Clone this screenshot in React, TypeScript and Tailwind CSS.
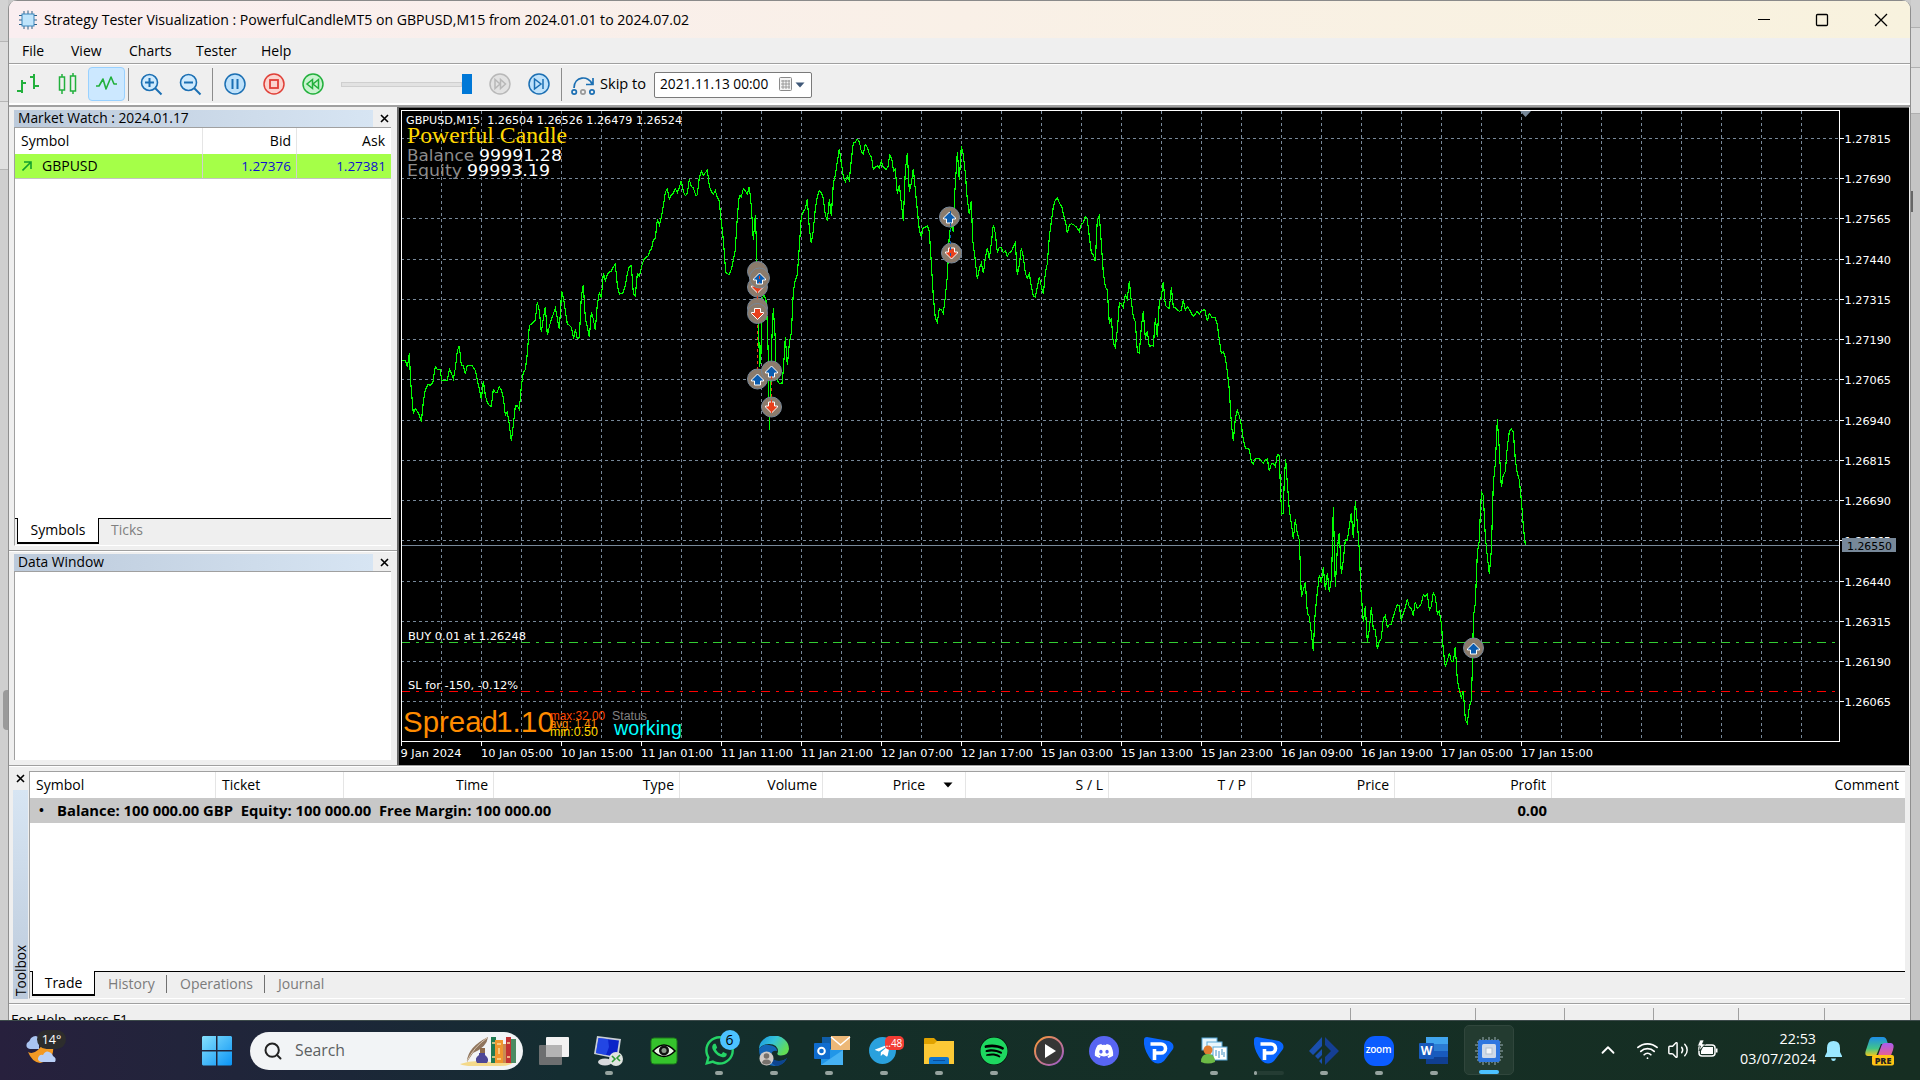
import type { ReactNode } from 'react';
import { ChevronUp, Search, Volume2, Wifi } from 'lucide-react';
import { FaDiscord, FaSpotify, FaTelegramPlane, FaWhatsapp } from 'react-icons/fa';

const GRID_Y = [138, 178, 218, 259, 299, 339, 379, 420, 460, 500, 540, 581, 621, 661, 701];
const PRICES = [
  '1.27815', '1.27690', '1.27565', '1.27440', '1.27315', '1.27190', '1.27065', '1.26940',
  '1.26815', '1.26690', '1.26565', '1.26440', '1.26315', '1.26190', '1.26065',
];
const GRID_X = Array.from({ length: 35 }, (_, i) => 441 + i * 40);
const TIMES = [
  '9 Jan 2024', '10 Jan 05:00', '10 Jan 15:00', '11 Jan 01:00', '11 Jan 11:00', '11 Jan 21:00',
  '12 Jan 07:00', '12 Jan 17:00', '15 Jan 03:00', '15 Jan 13:00', '15 Jan 23:00', '16 Jan 09:00',
  '16 Jan 19:00', '17 Jan 05:00', '17 Jan 15:00',
];

// close prices, in thirds of a pixel from each segment's origin
const SEGMENTS = [
  {
    origin: 'translate(390 100) scale(0.33333)',
    points:
      '36,781 46,781 52,801 58,760 62,845 70,942 76,925 82,934 88,946 94,966 100,905 106,870 114,853 120,856 128,850 136,800 142,808 150,808 156,842 172,840 178,808 184,820 190,836 196,805 202,752 208,737 214,796 220,797 226,822 232,796 246,796 256,812 262,840 268,868 274,898 280,843 286,886 292,908 298,916 304,919 310,868 316,877 321,878 328,861 334,870 340,893 346,945 352,936 358,975 364,1024 370,975 376,918 382,918 388,928 394,860 400,818 406,808 412,760 418,677 426,670 436,660 442,606 448,632 454,696 460,655 466,620 472,705 478,680 484,658 490,642 496,624 502,655 508,688 515,572 521,598 527,640 532,672 538,676 544,682 551,716 556,688 562,716 568,712 574,588 580,555 586,655 592,680 598,712 604,635 610,658 616,690 622,612 628,578 634,594 640,520 646,541 652,524 658,516 664,514 670,500 676,493 682,556 688,582 698,580 706,556 712,520 718,500 724,496 730,580 736,588 742,520 748,528 756,495 762,478 768,472 774,468 780,452 784,448 790,420 796,415 802,358 808,375 814,352 820,318 826,276 832,268 838,297 844,284 850,280 856,266 862,278 868,262 874,242 880,274 886,287 892,280 898,238 904,260 910,264 918,288 922,284 928,232 934,214 940,226 946,218 952,211 958,258 964,275 970,282 976,272 982,292 988,304 992,350 998,400 1002,445 1007,518 1012,521 1018,524 1024,508 1030,480 1036,450 1040,380 1046,300 1050,286 1054,290 1060,266 1066,272 1072,282 1078,260 1084,320 1090,420 1096,346 1099,420 1101,490 1104,600 1106,700 1109,800 1113,760 1115,600 1122,585 1128,600 1131,650 1135,770 1138,990 1143,850 1145,730 1150,625 1155,700 1158,790 1162,843 1168,850 1176,850 1180,810 1186,712 1192,796 1198,730 1204,700 1210,575 1216,540 1222,525 1228,440 1234,350 1240,335 1246,325 1252,298 1258,385 1264,430 1270,390 1276,325 1282,290 1288,271 1294,278 1300,296 1306,345 1312,362 1318,298 1324,347 1330,250 1336,225 1342,185 1348,146 1354,190 1360,230 1366,246 1372,228 1378,240 1384,180 1390,128 1396,126 1402,117',
  },
  {
    origin: 'translate(800 100) scale(0.33333)',
    points:
      '172,117 178,125 184,155 190,162 196,133 202,142 208,162 214,170 220,207 226,202 232,197 238,204 244,184 250,202 258,208 264,200 269,165 275,176 281,214 286,208 292,282 298,254 304,310 310,362 316,210 322,160 328,276 334,250 340,206 346,270 352,330 358,390 364,411 370,382 376,381 382,377 388,395 394,490 400,590 406,655 412,666 418,626 424,630 430,640 436,590 442,530 448,400 452,385 456,380 460,396 463,300 468,220 472,155 478,240 484,138 490,165 496,220 502,300 508,343 514,302 518,420 524,465 532,538 538,505 544,490 550,520 556,475 562,443 568,478 574,430 580,374 586,400 592,458 598,442 604,444 610,458 616,453 622,468 628,458 634,455 640,440 646,428 652,526 658,495 664,443 670,472 676,520 682,535 688,521 694,560 700,588 706,592 712,560 718,530 724,560 730,582 736,520 742,490 748,410 756,350 760,320 766,300 772,293 778,308 786,322 792,350 798,372 802,400 808,376 814,371 822,375 830,382 838,394 844,372 850,368 856,350 862,358 868,410 874,458 880,465 886,484 892,358 898,347 904,430 910,520 916,560 922,570 928,672 934,654 940,730 946,741 952,690 958,608 964,612 970,622 976,584 982,597 988,542 994,605 1000,650 1006,665 1012,755 1018,760 1024,680 1030,634 1036,716 1042,694 1048,740 1054,736 1060,738 1066,655 1072,710 1078,605 1084,590 1090,545 1096,616 1102,622 1108,626 1114,562 1120,622 1126,624 1132,630 1138,634 1144,630 1150,600 1156,630 1162,620 1168,628 1174,640 1180,649 1186,642 1192,634 1198,642 1204,634',
  },
  {
    origin: 'translate(1180 250) scale(0.33333)',
    points:
      '64,184 74,178 82,214 88,190 96,202 106,203 112,225 118,270 124,310 130,305 136,322 142,365 148,420 154,520 160,573 166,505 172,482 178,498 184,525 190,570 196,594 208,598 214,635 220,642 226,625 238,627 250,640 256,630 262,626 268,664 274,642 280,640 286,650 292,613 298,617 302,740 306,792 310,790 313,680 317,628 322,700 328,780 334,820 340,868 346,808 352,850 358,870 361,950 364,1042 370,1020 376,995 382,1090 388,1100 394,1150 400,1204 404,1110 410,1045 418,975 424,1000 430,950 436,1020 442,968 448,1026 454,990 457,900 460,770 466,1010 472,895 478,848 484,972 490,930 496,870 502,870 508,830 514,788 520,865 526,753 532,820 538,900 542,1010 550,1115 556,1068 562,1176 568,1140 574,1070 580,1138 586,1140 592,1197 598,1175 604,1165 610,1105 616,1097 622,1132 628,1124 634,1122 640,1100 646,1080 652,1064 658,1068 664,1112 670,1090 676,1072 682,1048 688,1072 694,1076 700,1097 706,1055 712,1076 718,1070 724,1060 730,1034 736,1040 742,1032 748,1080 754,1070 760,1028 766,1040 772,1092 778,1083 784,1120 790,1200 796,1252 802,1232 808,1208 814,1234 820,1234 826,1190 832,1290 838,1320 844,1342 850,1322 856,1410 862,1420 868,1370 874,1350 878,1230 880,1100 886,1060 892,910 898,870 902,760 905,727 910,737 916,860 922,920 928,972 934,900 940,700 946,640 952,508 958,600 964,712 970,675 976,665 982,590 988,545 994,536 1000,546 1006,630 1012,670 1018,690 1024,750 1030,830 1036,885',
  },
];

const MARKERS: { x: number; y: number; kind: 'buy' | 'sell' | 'blank' }[] = [
  { x: 757.5, y: 271.5, kind: 'blank' },
  { x: 757.5, y: 287, kind: 'sell' },
  { x: 759.5, y: 278, kind: 'buy' },
  { x: 757.5, y: 308, kind: 'blank' },
  { x: 757.5, y: 313.5, kind: 'sell' },
  { x: 757.5, y: 379, kind: 'buy' },
  { x: 771.5, y: 371, kind: 'buy' },
  { x: 771.5, y: 407, kind: 'sell' },
  { x: 949.5, y: 217, kind: 'buy' },
  { x: 951.5, y: 253, kind: 'sell' },
  { x: 1473.5, y: 648, kind: 'buy' },
];

interface LabelProps {
  x: number;
  y: number;
  w: number;
  size?: number;
  fill?: string;
  font?: string;
  children: string;
}

function Label({ x, y, w, size = 11, fill = '#fff', font = '"DejaVu Sans Condensed", "DejaVu Sans", sans-serif', children }: LabelProps) {
  return (
    <text x={x} y={y} fontSize={size} fill={fill} fontFamily={font} textLength={w} lengthAdjust="spacingAndGlyphs" xmlSpace="preserve">
      {children}
    </text>
  );
}

function Marker({ x, y, kind }: { x: number; y: number; kind: string }) {
  return (
    <g transform={`translate(${x} ${y})`}>
      <circle r="10" fill="#8b7b6c" stroke="#778899" />
      {kind === 'buy' && <path d="M0 -5L6 1V2H3V6H-3V2H-6V1Z" fill="#0a5cb0" stroke="#fff" />}
      {kind === 'sell' && <path d="M0 6L6 0V-1H3V-5H-3V-1H-6V0Z" fill="#e8401c" stroke="#fff" />}
    </g>
  );
}

function Chart() {
  const arial = '"Liberation Sans", Arial, sans-serif';
  const verdana = '"DejaVu Sans", Verdana, sans-serif';
  return (
    <svg width="1510" height="657" viewBox="399 108 1510 657" className="block bg-black">
      <g shapeRendering="crispEdges" stroke="#778899" fill="none">
        {GRID_Y.map((y) => (
          <line key={y} x1="401" x2="1839" y1={y + 0.5} y2={y + 0.5} strokeDasharray="3 3" />
        ))}
        {GRID_X.map((x) => (
          <line key={x} x1={x + 0.5} x2={x + 0.5} y1="111" y2="741" strokeDasharray="3 3" />
        ))}
        <line x1="402" x2="1839" y1="545.5" y2="545.5" />
        <line x1="402" x2="1836" y1="642.5" y2="642.5" stroke="#32cd32" strokeDasharray="9 6 3 6" strokeDashoffset="1" />
        <line x1="402" x2="1836" y1="691.5" y2="691.5" stroke="#ff0000" strokeDasharray="9 6 3 6" strokeDashoffset="1" />
      </g>

      <g fill="none" stroke="#00ff00" strokeWidth="1.15">
        {SEGMENTS.map((s) => (
          <polyline key={s.origin} points={s.points} transform={s.origin} vectorEffect="non-scaling-stroke" shapeRendering="crispEdges" />
        ))}
      </g>

      {/* frame, ticks and scroll mark */}
      <g shapeRendering="crispEdges" stroke="#fff" fill="none">
        <path d="M401.5 745V110.5H1839.5V741.5H401" />
        {TIMES.map((t, i) => (
          <line key={t} x1={401.5 + i * 80} x2={401.5 + i * 80} y1="742" y2="746" />
        ))}
        {GRID_Y.map((y) => (
          <line key={y} x1="1840" x2="1844" y1={y + 0.5} y2={y + 0.5} />
        ))}
      </g>
      <path d="M1520 111H1531L1525.5 117Z" fill="#778899" />

      {PRICES.map((p, i) => (
        <Label key={p} x={1844.5} y={GRID_Y[i] + 4.5} w={46.5}>{p}</Label>
      ))}
      <rect x="1842" y="538" width="54" height="14" fill="#778899" />
      <Label x={1847} y={549.5} w={45} fill="#000">1.26550</Label>
      {TIMES.map((t, i) => (
        <Label key={t} x={i === 0 ? 400.5 : 401 + i * 80} y={757} w={i === 0 ? 61 : 72}>{t}</Label>
      ))}

      {MARKERS.map((m, i) => (
        <Marker key={i} {...m} />
      ))}
      <g fill="none" shapeRendering="crispEdges" strokeDasharray="3 3">
        <path d="M757.5 290V302M757.5 325V369" stroke="#e8401c" />
        <path d="M771.5 376V413M759.5 276V283" stroke="#e8401c" />
        <path d="M950.5 211V257" stroke="#0a5cb0" />
      </g>

      <Label x={406} y={123.5} w={276}>GBPUSD,M15  1.26504 1.26526 1.26479 1.26524</Label>
      <Label x={407} y={142.5} w={160} size={22.5} fill="#ffd700" font='"Liberation Serif", serif'>Powerful Candle</Label>
      <Label x={407} y={160.5} w={67} size={16} fill="#8c8c8c" font={verdana}>Balance</Label>
      <Label x={479} y={160.5} w={83} size={16} font={verdana}>99991.28</Label>
      <Label x={407} y={176} w={55} size={16} fill="#8c8c8c" font={verdana}>Equity</Label>
      <Label x={467} y={176} w={83} size={16} font={verdana}>99993.19</Label>
      <Label x={408} y={640} w={118}>BUY 0.01 at 1.26248</Label>
      <Label x={408} y={689} w={110}>SL for -150, -0.12%</Label>
      <Label x={403} y={731.5} w={95} size={30} fill="#ff8c00" font={arial}>Spread</Label>
      <Label x={496} y={731.5} w={58} size={30} fill="#ff8c00" font={arial}>1.10</Label>
      <Label x={550} y={719.5} w={55} size={12} fill="#ff4500" font={arial}>max:32.00</Label>
      <Label x={550} y={728} w={47} size={12} fill="#ff8c00" font={arial}>avg: 1.41</Label>
      <Label x={550} y={736} w={48} size={12} fill="#ffd700" font={arial}>min:0.50</Label>
      <Label x={612} y={720} w={35} size={12} fill="#808080" font={arial}>Status</Label>
      <Label x={614} y={735} w={68} size={20} fill="#00ffff" font={arial}>working</Label>
    </svg>
  );
}

function Cross({ className = '' }: { className?: string }) {
  return (
    <svg width="9" height="9" viewBox="0 0 9 9" className={className}>
      <path d="M1 1L8 8M8 1L1 8" stroke="#000" strokeWidth="1.6" />
    </svg>
  );
}

function TitleBar() {
  return (
    <div className="h-[38px] shrink-0 flex items-center bg-gradient-to-r from-[#faeef0] to-[#f8f2de] border-t border-[#8a8a8a] pl-[9px]">
      <svg width="20" height="20" viewBox="0 0 20 20" className="shrink-0">
        <path d="M6 1V19M10 0.5V19.5M14 1V19M1 5.500H19M1 10H19M1 14.500H19" stroke="#2a5f86" strokeWidth="1" />
        <rect x="4" y="4" width="12" height="12" fill="#bfe4fb" stroke="#3a86bd" />
      </svg>
      <span className="ml-[6px] flex-1 text-[14.1px]">
        Strategy Tester Visualization : PowerfulCandleMT5 on GBPUSD,M15 from 2024.01.01 to 2024.07.02
      </span>
      <svg width="130" height="14" viewBox="0 0 130 14" fill="none" stroke="#000" className="mr-[22px]">
        <path d="M0 6.500H12" />
        <rect x="58.500" y="1.500" width="11" height="11" rx="1" strokeWidth="1.300" />
        <path d="M117 1L129 13M129 1L117 13" strokeWidth="1.300" />
      </svg>
    </div>
  );
}

function MenuBar() {
  return (
    <div className="h-[26px] shrink-0 flex items-center border-b border-[#a0a0a0] text-[14px] pt-px pl-[13px]">
      <span className="w-[49px]">File</span>
      <span className="w-[58px]">View</span>
      <span className="w-[67px]">Charts</span>
      <span className="w-[65px]">Tester</span>
      <span>Help</span>
    </div>
  );
}

function RoundIcon({ color, fill, children }: { color: string; fill: string; children: ReactNode }) {
  return (
    <svg width="22" height="22" viewBox="0 0 22 22" className="shrink-0" fill="none" stroke={color} strokeWidth="1.500">
      <circle cx="11" cy="11" r="10" fill={fill} />
      {children}
    </svg>
  );
}

function Toolbar() {
  return (
    <div className="h-[39px] shrink-0 flex items-center border-t border-white text-[14px]">
      <svg width="24" height="24" viewBox="0 0 24 24" className="ml-[8px] shrink-0" fill="none" stroke="#22b03c" strokeWidth="2">
        <path d="M5 8V21M0 19H5M5 11H9M17 2V17M13 5H17M17 14H22" />
      </svg>
      <svg width="20" height="24" viewBox="0 0 20 24" className="ml-[17px] shrink-0" stroke="#22b03c" strokeWidth="1.500" fill="none">
        <path d="M4 2V5M4 18V22M15 1V4M15 19V22" />
        <rect x="1.500" y="5" width="5" height="13" />
        <rect x="12.500" y="4" width="5" height="15" />
      </svg>
      <div className="ml-[10px] w-[37px] h-[34px] shrink-0 flex items-center justify-center bg-[#cce8ff] border border-[#99d1ff] rounded-sm">
        <svg width="22" height="16" viewBox="0 0 22 16" fill="none" stroke="#22b03c" strokeWidth="1.600" strokeLinejoin="round">
          <path d="M0 10H3L7 3L10 13L15 1L18 8H21" />
        </svg>
      </div>
      <div className="ml-[3px] w-px h-[33px] bg-[#8c8c8c]" />
      <svg width="23" height="23" viewBox="0 0 23 23" className="ml-[11px] shrink-0" fill="none" stroke="#1b6fb3" strokeWidth="1.600">
        <path d="M15 15L21.500 21.500" strokeWidth="2" />
        <circle cx="9.500" cy="9.500" r="8" fill="#cfeafd" />
        <path d="M5 9.500H14M9.500 5V14" strokeWidth="2" />
      </svg>
      <svg width="23" height="23" viewBox="0 0 23 23" className="ml-[16px] shrink-0" fill="none" stroke="#1b6fb3" strokeWidth="1.600">
        <path d="M15 15L21.500 21.500" strokeWidth="2" />
        <circle cx="9.500" cy="9.500" r="8" fill="#cfeafd" />
        <path d="M5 9.500H14" strokeWidth="2" />
      </svg>
      <div className="ml-[10px] mr-[11px] w-px h-[33px] bg-[#8c8c8c]" />
      <RoundIcon color="#1b6fb3" fill="#bfe2fb">
        <path d="M8.500 6V16M13.500 6V16" strokeWidth="2" />
      </RoundIcon>
      <div className="w-[17px]" />
      <RoundIcon color="#e04038" fill="#fbd5d0">
        <rect x="7" y="7" width="8" height="8" strokeWidth="1.800" />
      </RoundIcon>
      <div className="w-[17px]" />
      <RoundIcon color="#22b03c" fill="#c9f3cf">
        <path d="M10.500 6.500V15.500L5 11ZM16.500 6.500V15.500L11 11Z" />
      </RoundIcon>
      <div className="ml-[17px] w-[121px] h-[5px] shrink-0 bg-[#e2e2e2] border border-[#cfcfcf]" />
      <div className="w-[10px] h-[20px] shrink-0 bg-[#0078d7]" />
      <div className="w-[17px]" />
      <RoundIcon color="#b8b8b8" fill="#e2e2e2">
        <path d="M6 6.500V15.500L11 11ZM11.500 6.500V15.500L16.500 11Z" />
      </RoundIcon>
      <div className="w-[17px]" />
      <RoundIcon color="#1b6fb3" fill="#bfe2fb">
        <path d="M6.500 6V16L13 11ZM15 6V16" />
      </RoundIcon>
      <div className="ml-[11px] w-px h-[33px] bg-[#8c8c8c]" />
      <svg width="25" height="20" viewBox="0 0 25 20" className="ml-[9px] mt-[3px] shrink-0" fill="none" stroke="#1b6fb3" strokeWidth="1.700">
        <path d="M3 12C3 0 18 -1 21 8M22 2V8.500H15" />
        <circle cx="3.200" cy="16" r="2.200" />
        <circle cx="12" cy="16" r="2.200" stroke="#999" />
        <circle cx="21" cy="16" r="2.200" />
      </svg>
      <span className="ml-[4px] w-[54px] text-[14.6px]">Skip to</span>
      <div className="mt-px w-[158px] h-[26px] shrink-0 flex items-center bg-white border border-[#7a7a7a] rounded-[2px]">
        <span className="ml-[5px] w-[119px] text-[13.7px]">2021.11.13 00:00</span>
        <svg width="14" height="15" viewBox="0 0 14 15" stroke="#8a8a8a" fill="#f4f4f4">
          <rect x="0.500" y="0.500" width="12" height="13" rx="1" />
          <path d="M2 4H11M2 7H11M2 10H11M4 3V12M7 3V12M10 3V12" strokeWidth="0.800" />
        </svg>
        <svg width="10" height="6" viewBox="0 0 10 6" className="ml-[2px]">
          <path d="M0.500 0.500H9.500L5 5.500Z" fill="#3f5878" />
        </svg>
      </div>
    </div>
  );
}

function PanelCaption({ title }: { title: string }) {
  return (
    <div className="h-[17px] shrink-0 flex items-center">
      <div className="w-[359px] h-full flex items-center bg-gradient-to-r from-[#bccadb] to-[#d7e5f3] pl-[4px] text-[13.8px]">{title}</div>
      <Cross className="ml-[7px]" />
    </div>
  );
}

function MarketWatch() {
  return (
    <div className="h-[443px] shrink-0 flex flex-col pt-[3px] pl-[5px] pr-[6px]">
      <PanelCaption title="Market Watch : 2024.01.17" />
      <div className="h-[391px] shrink-0 flex flex-col bg-white border-l border-t border-[#a0a0a0] text-[14px]">
        <div className="h-[26px] flex items-center">
          <span className="w-[188px] h-full flex items-center pl-[6px] border-r border-[#e5e5e5]">Symbol</span>
          <span className="w-[94px] h-full flex items-center justify-end pr-[5px] border-r border-[#e5e5e5]">Bid</span>
          <span className="flex-1 text-right pr-[6px]">Ask</span>
        </div>
        <div className="h-[25px] flex items-center bg-[#a5ff48] border-b border-[#c3c3c3] text-[#0f0fd0]">
          <span className="w-[188px] h-full flex items-center pl-[7px] border-r border-[#d0d0d0] text-black">
            <svg width="10" height="10" viewBox="0 0 10 10" className="mr-[10px]" fill="none" stroke="#12a02c" strokeWidth="1.600">
              <path d="M0.500 9.500L9 1M2 1H9V8" />
            </svg>
            GBPUSD
          </span>
          <span className="w-[94px] h-full flex items-center justify-end pr-[5px] border-r border-[#d0d0d0] text-[13.5px]">1.27376</span>
          <span className="flex-1 text-right pr-[5px] text-[13.5px]">1.27381</span>
        </div>
      </div>
      <div className="h-[28px] flex bg-[#efefef] border-l border-[#a0a0a0] border-b border-b-white text-[14px]">
        <div className="w-[2px] h-px bg-black" />
        <div className="w-[82px] h-[26px] flex items-center justify-center bg-white border-x border-b-2 border-black">Symbols</div>
        <div className="flex-1 border-t border-black pt-[2px] pl-[12px] text-[#808080]">Ticks</div>
      </div>
    </div>
  );
}

function DataWindow() {
  return (
    <div className="flex-1 flex flex-col border-t border-[#a0a0a0] pt-[3px] pl-[5px] pr-[6px] shadow-[inset_0_1px_0_#fff]">
      <PanelCaption title="Data Window" />
      <div className="h-[189px] bg-white border-l border-t border-[#a0a0a0]" />
    </div>
  );
}

const COLUMNS = [
  { title: 'Symbol', cls: 'w-[186px] pl-[6px]' },
  { title: 'Ticket', cls: 'w-[128px] pl-[6px]' },
  { title: 'Time', cls: 'w-[150px] pr-[5px] justify-end' },
  { title: 'Type', cls: 'w-[186px] pr-[5px] justify-end' },
  { title: 'Volume', cls: 'w-[143px] pr-[5px] justify-end' },
  { title: 'Price', cls: 'w-[143px] pr-[12px] justify-end' },
  { title: 'S / L', cls: 'w-[143px] pr-[5px] justify-end' },
  { title: 'T / P', cls: 'w-[143px] pr-[5px] justify-end' },
  { title: 'Price', cls: 'w-[143px] pr-[5px] justify-end' },
  { title: 'Profit', cls: 'w-[157px] pr-[5px] justify-end' },
];

function Toolbox() {
  return (
    <div className="h-[238px] shrink-0 flex border-t border-[#a0a0a0] shadow-[inset_0_1px_0_#fff]">
      <div className="w-[20px] shrink-0 flex flex-col items-center">
        <Cross className="mt-[8px] ml-[2px]" />
        <div className="mt-[7px] ml-[2px] w-[15px] h-[209px] flex items-center bg-gradient-to-b from-[#d7e5f3] to-[#bccadb]">
          <span className="mt-auto mb-[3px] leading-[15px] text-[13.6px] [writing-mode:vertical-rl] rotate-180">Toolbox</span>
        </div>
      </div>
      <div className="mt-[5px] w-[1876px] flex flex-col">
        <div className="h-[200px] bg-white border-l border-t border-[#a0a0a0]">
          <div className="h-[26px] flex text-[14px]">
            {COLUMNS.map((c, i) => (
              <div key={i} className={`${c.cls} shrink-0 flex items-center border-r border-[#e5e5e5]`}>
                {c.title}
                {i === 5 && (
                  <svg width="10" height="6" viewBox="0 0 10 6" className="ml-[18px]">
                    <path d="M0.500 0.500H9.500L5 5.500Z" />
                  </svg>
                )}
              </div>
            ))}
            <div className="flex-1 flex items-center justify-end pr-[6px]">Comment</div>
          </div>
          <div className="h-[25px] flex items-center bg-[#c8c8c8] text-[14.8px] font-bold">
            <span className="w-[27px] pl-[9px] text-[13px]">•</span>
            <span className="flex-1 whitespace-pre">Balance: 100 000.00 GBP  Equity: 100 000.00  Free Margin: 100 000.00</span>
            <span className="mr-[358px]">0.00</span>
          </div>
        </div>
        <div className="h-[28px] flex border-l border-[#a0a0a0] border-b border-b-white text-[14px] text-[#7b7b7b]">
          <div className="w-[2px] h-px bg-black" />
          <div className="w-[63px] h-[25px] flex items-center justify-center bg-white border-x border-b-2 border-black text-black pt-px">Trade</div>
          <div className="flex-1 flex items-center border-t border-black pb-[2px]">
            <span className="pl-[13px] w-[72px] border-r border-[#707070]">History</span>
            <span className="pl-[13px] w-[98px] border-r border-[#707070]">Operations</span>
            <span className="pl-[13px]">Journal</span>
          </div>
        </div>
      </div>
    </div>
  );
}

function StatusBar() {
  return (
    <div className="flex-1 flex overflow-hidden border-t border-[#a0a0a0] shadow-[inset_0_1px_0_#fff] text-[14px]">
      <span className="pl-[2px] pt-[7px] w-[1341px] whitespace-nowrap">For Help, press F1</span>
      <div className="mt-[4px] w-[125px] border-l border-[#a0a0a0]" />
      <div className="mt-[4px] w-[89px] border-l border-[#a0a0a0]" />
      <div className="mt-[4px] w-[89px] border-l border-[#a0a0a0]" />
      <div className="mt-[4px] w-[85px] border-l border-[#a0a0a0]" />
      <div className="mt-[4px] w-[86px] border-l border-[#a0a0a0]" />
      <div className="mt-[4px] flex-1 border-l border-[#a0a0a0]" />
    </div>
  );
}

function Slot({ open = false, children }: { open?: boolean; children: ReactNode }) {
  return (
    <div className="w-[55px] h-[60px] shrink-0 flex flex-col items-center pt-[15px]">
      <div className="w-[30px] h-[30px] relative">{children}</div>
      {open && <div className="mt-[5px] w-[8px] h-[4px] rounded-full bg-[#96a39f]" />}
    </div>
  );
}

function PIcon() {
  return (
    <svg width="30" height="30" viewBox="0 0 30 30">
      <path d="M3 1L25 5Q31 8 29 13L20 25Q14 30 8 25Q-1 14 0 4Q0 1 3 1Z" fill="#0a66ff" />
      <path d="M10.500 24V13M6.500 8H17A4 4 0 0 1 17 17H12" fill="none" stroke="#fff" strokeWidth="3.600" />
    </svg>
  );
}

function Weather() {
  return (
    <div className="relative w-[202px] h-full shrink-0">
      <svg width="32" height="32" viewBox="0 0 32 32" className="absolute left-[26px] top-[13px]">
        <path d="M2 18Q10 22 18 8L27 12Q29 26 14 29Q6 28 2 18Z" fill="#f39a24" />
        <path d="M4 15Q-1 14 1 9Q4 7 5 4Q10 0 13 4V15Z" fill="#a9c3f0" />
        <path d="M15 28Q10 26 13 22Q15 20 17 21Q20 15 25 19Q27 21 27 22Q31 24 29 28Z" fill="#b9d0f7" />
      </svg>
      <span className="absolute left-[37px] top-[9px] w-[29px] h-[19px] rounded-full bg-[#2d2d2d] text-white text-[12.5px] leading-[19px] text-center">
        14°
      </span>
    </div>
  );
}

function Taskbar() {
  return (
    <div className="h-[60px] flex items-center border-t border-[#3c4a4a] bg-[linear-gradient(90deg,#27203d_0px,#22243b_180px,#1c2738_350px,#142d31_560px,#142e29_800px,#152f26_1200px,#162e22_1920px)] text-white">
      <Weather />
      <svg width="30" height="30" viewBox="0 0 30 30" className="shrink-0">
        <defs>
          <linearGradient id="win" x1="0" y1="0" x2="1" y2="1">
            <stop offset="0" stopColor="#86e0fd" />
            <stop offset="1" stopColor="#0a94f5" />
          </linearGradient>
        </defs>
        <path d="M1 0H14V14H0V1ZM15.500 0H29L30 1V14H15.500ZM0 15.500H14V29.500H1L0 28.500ZM15.500 15.500H30V28.500L29 29.500H15.500Z" fill="url(#win)" />
      </svg>
      <div className="ml-[18px] w-[273px] h-[38px] shrink-0 flex items-center rounded-full bg-[#f2f4f6] pl-[13px] pr-[5px]">
        <Search size={20} color="#222" strokeWidth={2.4} />
        <span className="ml-[12px] flex-1 text-[15.8px] text-[#5c5f62]">Search</span>
        <svg width="58" height="32" viewBox="0 0 58 32">
          <path d="M0 29Q14 24 30 27H54Q50 31 40 31H12Q4 31 0 29Z" fill="#f4d98a" />
          <path d="M7 26Q8 12 28 2Q27 12 13 18L7 27Z" fill="#8f745c" />
          <path d="M7 26Q14 12 27 3" stroke="#d8c6b0" fill="none" />
          <rect x="20" y="13" width="5" height="5" fill="#8d6a4a" />
          <path d="M19 18H25V20Q30 24 27 28H17Q14 23 19 20Z" fill="#4d4796" />
          <rect x="31" y="2" width="5" height="26" fill="#1f7a52" />
          <rect x="35" y="5" width="8" height="23" fill="#f0962e" />
          <rect x="43" y="9" width="4" height="19" fill="#c98a52" />
          <rect x="46" y="2" width="5" height="26" fill="#c43232" />
          <rect x="51" y="4" width="5" height="24" fill="#4c8a62" />
          <path d="M37 9H41M37 24H41M39 13V19M32 8H35M32 22H35M47 8H50M47 22H50" stroke="#f9dc9a" strokeWidth="1.500" />
        </svg>
      </div>
      <div className="ml-[3px] flex h-full">
        <Slot>
          <svg width="30" height="30" viewBox="0 0 30 30">
            <rect x="7" y="1" width="23" height="20" rx="1" fill="#f2f2f2" />
            <rect x="0" y="9" width="23" height="20" rx="1" fill="#6d6f70" />
            <rect x="7" y="9" width="16" height="12" fill="#b4b4b4" />
          </svg>
        </Slot>
        <Slot open>
          <svg width="30" height="30" viewBox="0 0 30 30">
            <ellipse cx="11" cy="26" rx="7" ry="3.500" fill="#d8dadd" />
            <path d="M3 0L27 3L24 23L0 18Z" fill="#c9ced6" />
            <path d="M4.500 2L25 4.500L22.500 21L2 17Z" fill="#0b22c8" />
            <path d="M4.500 2L14 3L15 11L12 19L2 17Z" fill="#2c55f0" opacity="0.700" />
            <circle cx="22" cy="23" r="7" fill="#dfe3df" />
            <path d="M18 20L21 23L18 26M26 19L23 22L26 25" stroke="#2c9a34" strokeWidth="1.600" fill="none" />
          </svg>
        </Slot>
        <Slot>
          <svg width="30" height="30" viewBox="0 0 30 30">
            <rect x="2" y="2" width="26" height="26" rx="3" fill="#35c32c" stroke="#1c7a1a" />
            <path d="M4 15Q15 3 26 15Q15 26 4 15Z" fill="#e8f6e4" stroke="#000" strokeWidth="1.500" />
            <circle cx="15" cy="14.500" r="5" fill="#111" />
            <circle cx="15" cy="14.500" r="2.500" fill="#8a9a8a" />
          </svg>
        </Slot>
        <Slot open>
          <FaWhatsapp size={33} color="#25d366" className="absolute -left-[1px] -top-[2px]" />
          <span className="absolute left-[16px] -top-[6px] w-[20px] h-[20px] rounded-full bg-[#4cc2ff] text-black text-[14px] leading-[20px] text-center">6</span>
        </Slot>
        <Slot open>
          <svg width="30" height="30" viewBox="0 0 30 30">
            <defs>
              <linearGradient id="edge" x1="0" y1="0" x2="1" y2="0.500">
                <stop offset="0" stopColor="#1692e0" />
                <stop offset="0.500" stopColor="#35c3d8" />
                <stop offset="1" stopColor="#62dd55" />
              </linearGradient>
            </defs>
            <path d="M0 13A15 13.500 0 0 1 30 13Q29 20 21 19.500Q17 19 19 16Q19 8 10 8Q3 8 0 13Z" fill="url(#edge)" />
            <path d="M0 13Q3 8 10 9Q18 10 18 15Q13 14 12 19Q13 25 20 25Q25 25 28 22Q24 30 15 30Q0 28 0 13Z" fill="#1466b8" />
            <path d="M12 19Q13 25 20 25Q25 25 28 22Q24 30 17 30Q10 27 12 19Z" fill="#0d4590" />
            <circle cx="7.500" cy="22.500" r="7" fill="#cfcac6" />
            <circle cx="7.500" cy="20" r="2.800" fill="#77716c" />
            <path d="M3 27Q3 23.500 7.500 23.500Q12 23.500 12 27Q7.500 30 3 27Z" fill="#77716c" />
          </svg>
        </Slot>
        <Slot open>
          <svg width="38" height="30" viewBox="0 0 38 30">
            <rect x="8" y="1" width="18" height="16" fill="#0f5da8" />
            <rect x="7" y="13" width="22" height="16" fill="#2196e8" />
            <path d="M7 29L29 14V29Z" fill="#46b2f4" />
            <rect x="0" y="7" width="16" height="16" rx="1" fill="#0f6cce" />
            <circle cx="7.500" cy="15" r="3.300" fill="none" stroke="#fff" strokeWidth="2" />
            <rect x="17" y="0" width="19" height="14" fill="#edb878" />
            <path d="M17 1L26.500 9L36 1" fill="none" stroke="#fff" strokeWidth="1.500" />
          </svg>
        </Slot>
        <Slot open>
          <div className="mt-[1px] w-[27px] h-[27px] rounded-full bg-[#2aa1dd] flex items-center justify-center">
            <FaTelegramPlane size={17} color="#fff" />
          </div>
          <span className="absolute left-[16px] top-0 w-[19px] h-[14px] rounded-[5px] bg-[#f23c34] text-white text-[10px] leading-[14px] text-center">..48</span>
        </Slot>
        <Slot open>
          <svg width="30" height="30" viewBox="0 0 30 30">
            <path d="M0 3Q0 2 1 2H10L13 5V12H0Z" fill="#e0a200" />
            <path d="M0 8H10L13 5H30V28H0Z" fill="#fcc936" />
            <path d="M5 28V23Q5 21 7 21H23Q25 21 25 23V28Z" fill="#0f76cf" />
            <path d="M9 24.500H21" stroke="#0a4c9a" />
          </svg>
        </Slot>
        <Slot open>
          <div className="mt-[1px] ml-[1px] w-[28px] h-[28px] rounded-full bg-black">
            <FaSpotify size={28} color="#1ed760" />
          </div>
        </Slot>
        <Slot>
          <svg width="30" height="30" viewBox="0 0 30 30">
            <defs>
              <linearGradient id="mp" x1="0" y1="0" x2="1" y2="1">
                <stop offset="0" stopColor="#fb9a35" />
                <stop offset="1" stopColor="#9a5ad0" />
              </linearGradient>
            </defs>
            <circle cx="15" cy="15" r="14" fill="#363636" stroke="url(#mp)" strokeWidth="2" />
            <path d="M11 8L22 15L11 22Z" fill="#fff" />
          </svg>
        </Slot>
        <Slot>
          <div className="w-[30px] h-[30px] rounded-full bg-[#5865f2] flex items-center justify-center">
            <FaDiscord size={20} color="#fff" />
          </div>
        </Slot>
        <Slot>
          <PIcon />
        </Slot>
        <Slot open>
          <svg width="30" height="30" viewBox="0 0 30 30">
            <rect x="3" y="2" width="15" height="12" fill="#e8f6fd" stroke="#58a8d8" />
            <rect x="8" y="6" width="15" height="13" fill="#e8f6fd" stroke="#58a8d8" />
            <rect x="14" y="11" width="14" height="13" fill="#fff" stroke="#58a8d8" />
            <path d="M17 20V14M20 22V15M23 19V13M25 21V16" stroke="#3f8fc4" />
            <circle cx="9" cy="14" r="4.500" fill="#e07b30" />
            <path d="M2 26Q2 18 9 18Q16 18 16 26Q9 29 2 26Z" fill="#6cbb45" />
          </svg>
        </Slot>
        <div className="w-[55px] h-[60px] flex flex-col items-center pt-[15px]">
          <PIcon />
          <div className="mt-[5px] w-[30px] h-[4px] rounded-full bg-[#243c33]">
            <div className="w-[3px] h-[4px] rounded-full bg-[#96a39f]" />
          </div>
        </div>
        <Slot open>
          <svg width="30" height="30" viewBox="0 0 30 30">
            <path d="M13 1V10L4 19L0 15ZM13 13V19L9 23L6 20ZM13 22V28L10 25Z" fill="#1a4fae" />
            <path d="M16 1L30 15L16 29V21L22 15L16 9Z" fill="#153f94" />
          </svg>
        </Slot>
        <Slot open>
          <div className="w-[30px] h-[30px] rounded-[11px] bg-[#0b5cff] text-white text-[10px] leading-[27px] text-center font-semibold tracking-[-0.2px]">zoom</div>
        </Slot>
        <Slot open>
          <svg width="30" height="30" viewBox="0 0 30 30">
            <rect x="7" y="1" width="22" height="7" fill="#41a5ee" />
            <rect x="7" y="8" width="22" height="7" fill="#2b7cd3" />
            <rect x="7" y="15" width="22" height="7" fill="#185abd" />
            <rect x="7" y="21" width="22" height="7" fill="#103f91" />
            <rect x="0" y="7" width="15" height="16" rx="1" fill="#185abd" />
            <text x="7.500" y="19" textAnchor="middle" fontSize="12" fontWeight="700" fill="#fff">W</text>
          </svg>
        </Slot>
        <div className="w-[55px] h-[60px] flex flex-col items-center pt-[4px]">
          <div className="w-[50px] h-[50px] flex flex-col items-center rounded-[5px] bg-[#233b30] border border-[#30463c] pt-[10px]">
            <svg width="30" height="30" viewBox="0 0 30 30">
              <path d="M6 3V27M9 1V29M12 3V27M15 1V29M18 3V27M21 1V29M24 3V27M3 6H27M1 9H29M3 12H27M1 15H29M3 18H27M1 21H29M3 24H27" stroke="#a9bcc4" strokeWidth="0.900" />
              <rect x="4" y="4" width="22" height="22" rx="2" fill="#2f77e0" />
              <rect x="8" y="8" width="14" height="14" rx="1.500" fill="#cfdae8" />
              <rect x="12" y="12" width="6" height="6" fill="#f4f6f8" stroke="#b0bfd0" />
            </svg>
            <div className="mt-[4px] w-[20px] h-[4px] shrink-0 rounded-full bg-[#4cc2ff]" />
          </div>
        </div>
      </div>

      <div className="ml-[81px] mb-px flex items-center">
        <ChevronUp size={22} strokeWidth={2} />
        <Wifi size={23} strokeWidth={1.8} className="ml-[17px]" />
        <Volume2 size={22} strokeWidth={1.6} className="ml-[8px]" />
        <svg width="21" height="20" viewBox="0 0 21 20" className="ml-[8px]">
          <rect x="2" y="5" width="16" height="11" rx="3" fill="none" stroke="#fff" strokeWidth="1.500" />
          <path d="M6 7H16V14H4V11ZM19 8.500H20.500V12.500H19Z" fill="#fff" />
          <path d="M3 0L7 0L5.500 4H8.500L2 11L3.500 6H0.500Z" fill="#fff" stroke="#162e22" strokeWidth="0.700" />
        </svg>
      </div>
      <div className="ml-auto mr-[9px] mb-[3px] text-right text-[14.3px] leading-[20px]">
        <div>22:53</div>
        <div>03/07/2024</div>
      </div>
      <svg width="17" height="20" viewBox="0 0 17 20" className="mr-[23px] shrink-0">
        <path d="M2 7Q2 0 8.500 0Q15 0 15 7V11L17 15V16H0V15L2 11ZM6 17.500H11Q10.500 20 8.500 20Q6.500 20 6 17.500Z" fill="#9be8ff" />
      </svg>
      <svg width="30" height="30" viewBox="0 0 30 30" className="mr-[25px] shrink-0">
        <defs>
          <linearGradient id="coA" x1="0" y1="0" x2="0" y2="1">
            <stop offset="0" stopColor="#1e8de8" />
            <stop offset="0.600" stopColor="#41c48a" />
            <stop offset="1" stopColor="#f2c81c" />
          </linearGradient>
          <linearGradient id="coB" x1="0" y1="0" x2="0" y2="1">
            <stop offset="0" stopColor="#a95cf0" />
            <stop offset="1" stopColor="#f5607c" />
          </linearGradient>
        </defs>
        <path d="M8 1H18Q21 1 22 5L23 8H16L11 20H3Q-1 20 1 14L4 5Q5 1 8 1Z" fill="url(#coA)" />
        <path d="M20 7H26Q30 8 28 14L25 22H12L16 11Q17 7 20 7Z" fill="url(#coB)" />
        <rect x="7" y="19" width="22" height="10.500" rx="2" fill="#ffc414" />
        <text x="18" y="27.500" textAnchor="middle" fontSize="9" fontWeight="800" fill="#222">PRE</text>
      </svg>
    </div>
  );
}

export default function App() {
  return (
    <div className="w-[1920px] h-[1080px] flex flex-col overflow-hidden bg-[#c9c9c9] text-black leading-[1.35] font-['Open_Sans','Noto_Sans',sans-serif]">
      <div className="h-[1020px] shrink-0 flex">
        {/* windows behind */}
        <div className="w-[8px] shrink-0 flex flex-col bg-[#cfcfcf]">
          <div className="h-[42px] border-b border-[#b5b5b5] bg-[#d3d3d3]" />
          <div className="h-[60px] border-b border-[#b5b5b5] bg-[#dcdcdc]" />
          <div className="h-[68px] border-b border-[#b5b5b5] bg-[#e0e0e0]" />
          <div className="mt-[520px] ml-[3px] h-[40px] rounded-l-sm bg-[#9a9a9a]" />
        </div>

        <div className="w-[1903px] shrink-0 flex flex-col overflow-hidden bg-[#efefef] border-x border-[#8f8f8f] rounded-t-[9px]">
          <TitleBar />
          <MenuBar />
          <Toolbar />
          <div className="h-[2px] shrink-0 bg-white" />
          <div className="h-[2px] shrink-0 bg-[#a0a0a0]" />
          <div className="h-[658px] shrink-0 flex">
            <div className="w-[388px] shrink-0 flex flex-col">
              <MarketWatch />
              <DataWindow />
            </div>
            <div className="border-l-2 border-t border-[#696969]">
              <Chart />
            </div>
          </div>
          <Toolbox />
          <StatusBar />
        </div>

        <div className="flex-1 flex flex-col bg-[#c4c4c4]">
          <div className="h-[28px] border-b border-[#b0b0b0] bg-[#d0d0d0]" />
          <div className="h-[40px] border-b border-[#b0b0b0] bg-[#dadada]" />
          <div className="h-[46px] border-b border-[#b0b0b0] bg-[#e0e0e0]" />
          <div className="mt-[77px] w-[2px] h-[21px] bg-[#666]" />
        </div>
      </div>
      <Taskbar />
    </div>
  );
}
